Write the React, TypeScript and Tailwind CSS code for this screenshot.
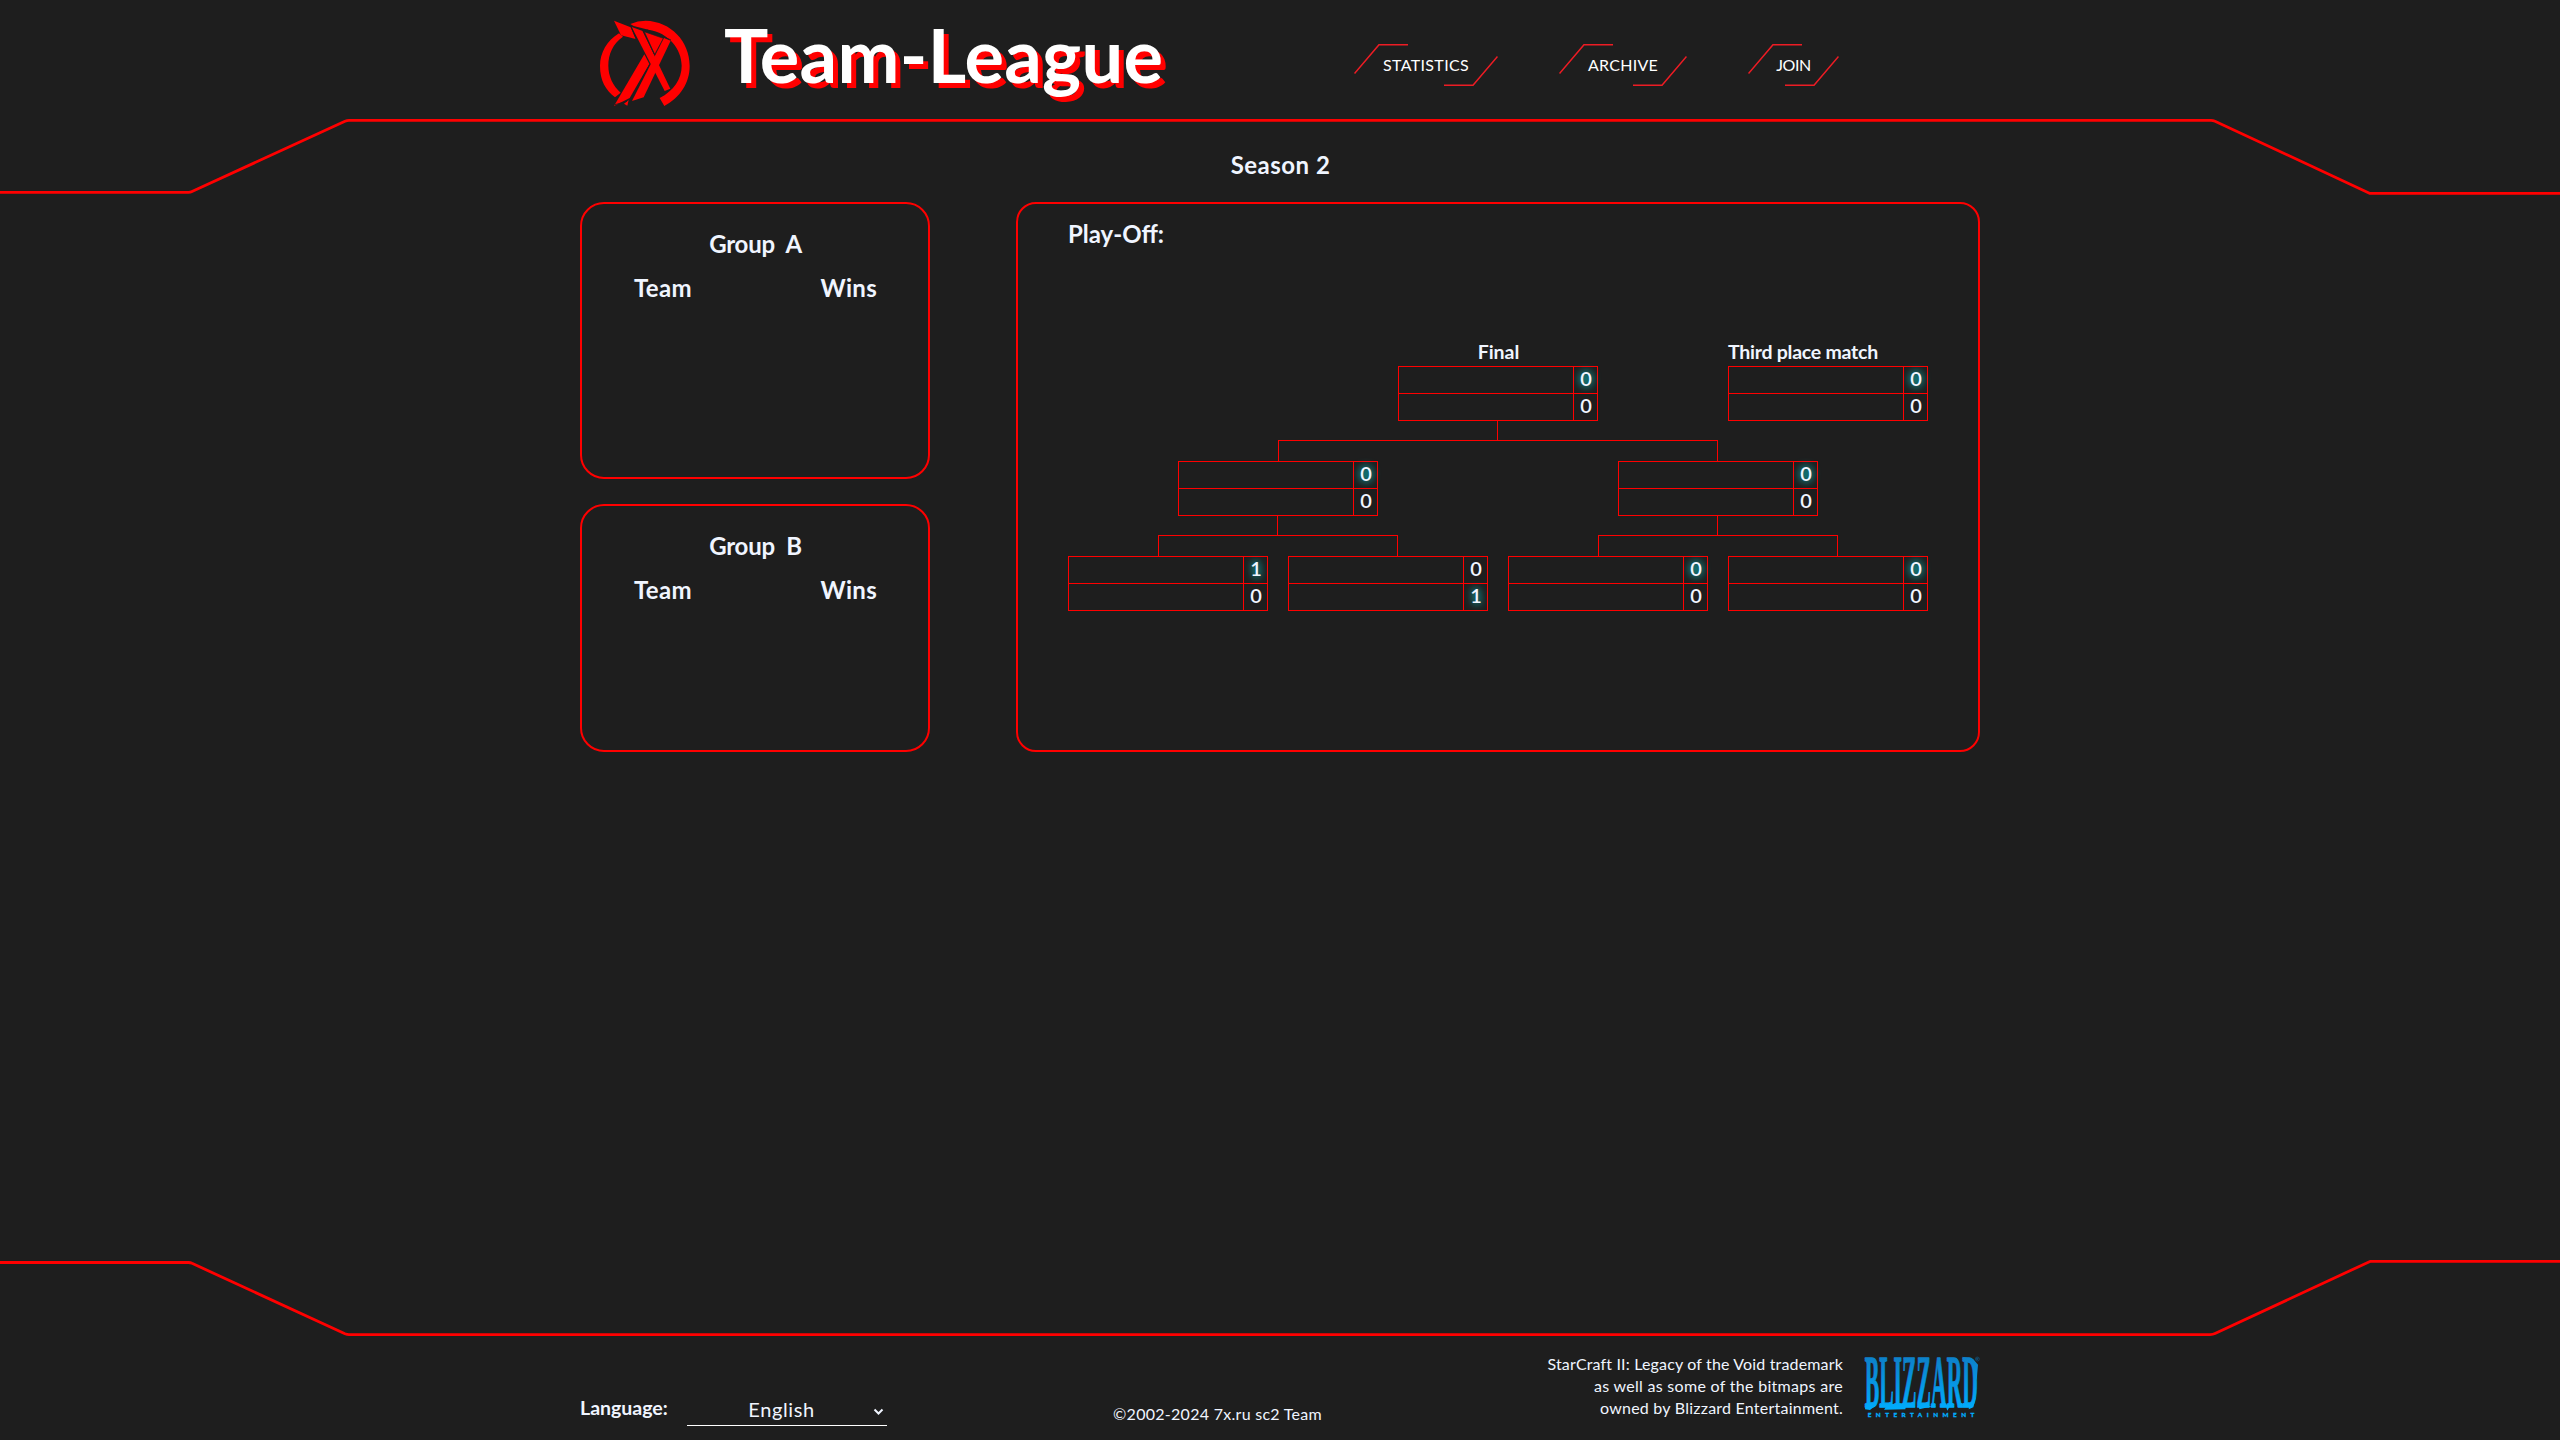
import React from "react";

type Pair = [number, number];

function FrameLines() {
  return (
    <svg className="pointer-events-none absolute inset-0" width="2560" height="1440" viewBox="0 0 2560 1440" fill="none" stroke="#ff0000" strokeWidth="2.8" strokeLinejoin="round" aria-hidden="true">
      <path d="M0 192.4H188.5Q190.5 192.4 192 191.6L345 121.2Q347 120.4 349 120.4H2211Q2213 120.4 2215 121.3L2370 193.4H2560" />
      <path d="M0 1262.5H188.5Q190.5 1262.5 192 1263.3L345 1333.8Q347 1334.6 349 1334.6H2210Q2213 1334.6 2215 1333.6L2370 1261.4H2560" />
    </svg>
  );
}

function LeagueLogo() {
  return (
    <svg className="mt-[14px] ml-[15px] shrink-0" width="100" height="98" viewBox="0 0 300 294" fill="#ff0000" aria-hidden="true">
      <path d="M106 30Q128 20 152 20C228 22 284 82 284 156C284 206 256 250 208 276L194 252C236 230 260 196 260 155C260 106 222 56 160 47L116 36Z" />
      <path d="M72 58L84 68C54 88 40 120 40 155C40 186 54 216 77 236L60 250C32 228 15 200 15 156C15 116 36 80 72 58Z" />
      <path d="M57 20L107 40L122 75L78 64Z" />
      <path d="M110 39L143 51L226 224L209 231Z" />
      <path d="M148 53L205 73L179 122Z" stroke="#1e1e1e" strokeWidth="2" />
      <path d="M207 72L227 80L146 250L111 261Z" />
      <path d="M148 121L163 150L104 252L57 276Z" />
      <path d="M101 258L97 275L87 269Z" />
      <path d="M163 153L106 258M108 38L124 76M143 49L179 122M60 272L96 262M155 47L228 78" stroke="#1e1e1e" strokeWidth="2.5" fill="none" />
    </svg>
  );
}

function NavButton({ label, width, tracking }: { label: string; width: string; tracking: string }) {
  return (
    <a className={`relative flex h-[42px] items-center justify-center pb-px text-base text-white ${width}`}>
      <svg className="absolute top-0 left-0" width="54" height="31" viewBox="0 0 54 31" fill="none" stroke="#ed1c24" strokeWidth="1.5" aria-hidden="true">
        <path d="M0.5 29.5L25 0.7H54" />
      </svg>
      <span className={tracking}>{label}</span>
      <svg className="absolute right-0 bottom-0" width="54" height="31" viewBox="0 0 54 31" fill="none" stroke="#ed1c24" strokeWidth="1.5" aria-hidden="true">
        <path d="M0 30.3H29L53.5 1.5" />
      </svg>
    </a>
  );
}

function GroupCard({ name, height }: { name: string; height: string }) {
  return (
    <section className={`rounded-[24px] border-2 border-[#ff0000] pt-[18px] pr-[51px] pl-[52px] text-2xl leading-[44px] font-bold ${height}`}>
      <h2 className="text-center leading-[44px] tracking-[-0.2px] whitespace-pre">{`Group  ${name}`}</h2>
      <div className="flex justify-between leading-[44px]">
        <span className="tracking-[0.3px]">Team</span>
        <span className="tracking-[0.3px]">Wins</span>
      </div>
    </section>
  );
}

const glow = "[text-shadow:0_0_10px_#00ffff,0_0_7px_#00ffff4d]";

function Match({ scores }: { scores: Pair }) {
  const winner = scores[0] >= scores[1] ? 0 : 1;
  return (
    <div className="flex h-[55px] w-[200px] flex-col divide-y divide-[#ff0000] border border-[#ff0000] text-xl">
      {scores.map((score, i) => (
        <div key={i} className="box-content flex h-[26px]">
          <span className="flex-1" />
          <span className={`flex w-6 items-center justify-center border-l border-[#ff0000] pb-1 pl-px font-semibold ${i === winner ? glow : ""}`}>{score}</span>
        </div>
      ))}
    </div>
  );
}

function Fork({ width }: { width: string }) {
  return (
    <div className={`flex h-10 flex-col ${width}`}>
      <div className="ml-[calc(50%-1px)] h-[19px] w-px bg-[#ff0000]" />
      <div className="flex-1 border-x border-t border-[#ff0000]" />
    </div>
  );
}

function Semifinal({ score, left, right }: { score: Pair; left: Pair; right: Pair }) {
  return (
    <div className="flex flex-col items-center">
      <Match scores={score} />
      <Fork width="w-[240px]" />
      <div className="flex gap-5">
        <Match scores={left} />
        <Match scores={right} />
      </div>
    </div>
  );
}

function BlizzardLogo() {
  return (
    <svg className="shrink-0 overflow-visible" width="118" height="74" viewBox="18 0 354 222" fill="url(#ice)" aria-label="Blizzard Entertainment">
      <defs>
        <linearGradient id="ice" gradientUnits="userSpaceOnUse" x1="0" y1="20" x2="0" y2="185">
          <stop offset="0" stopColor="#0d80c8" />
          <stop offset="1" stopColor="#00aeff" />
        </linearGradient>
      </defs>
      <text x="26" y="171" fontFamily='"Liberation Serif", serif' fontWeight="700" fontSize="222" stroke="url(#ice)" strokeWidth="4" textLength="340" lengthAdjust="spacingAndGlyphs">
        BLIZZARD
      </text>
      <path d="M26 24L44 30L40 60ZM28 168L60 166L42 180L27 178ZM84 179L96 162H128L152 156L148 178ZM318 20L352 28L366 44L362 90L346 40ZM188 168H232L190 178ZM268 165L284 165L274 182ZM340 165L360 140L352 172L338 178Z" />
      <text x="35" y="201" fontFamily="Lato, sans-serif" fontWeight="900" fontSize="19" stroke="#00aeff" strokeWidth="0.8" textLength="320" lengthAdjust="spacing">
        ENTERTAINMENT
      </text>
      <g fill="none" stroke="#0d80c8" strokeWidth="1.5" opacity="0.7">
        <circle cx="364" cy="27" r="6" />
        <path d="M362 30V24H366V27H362L366 30" />
      </g>
    </svg>
  );
}

export default function App() {
  return (
    <div className="relative h-[1440px] w-full overflow-hidden bg-[#1e1e1e] font-[Lato,sans-serif] text-[#f0f5ff]">
      <FrameLines />
      <div className="relative mx-auto flex h-full w-[1400px] flex-col">
        <header className="flex h-[119px] shrink-0 items-start">
          <LeagueLogo />
          <h1 className="mt-[10px] ml-[29px] w-[630px] shrink-0 text-[74px] leading-[90px] font-bold tracking-[0.3px] text-white [text-shadow:5px_5px_0_#ff0000]">Team-League</h1>
          <nav className="mt-[44px] flex gap-[61px]">
            <NavButton label="STATISTICS" width="w-[144px]" tracking="tracking-[0.35px]" />
            <NavButton label="ARCHIVE" width="w-[128px]" tracking="tracking-[0.25px]" />
            <NavButton label="JOIN" width="w-[91px]" tracking="tracking-[-0.4px]" />
          </nav>
        </header>

        <h2 className="mt-[30px] pl-px text-center text-2xl leading-8 font-bold tracking-[0.5px]">Season 2</h2>

        <main className="mt-[21px] flex justify-between">
          <div className="flex w-[350px] flex-col gap-[25px]">
            <GroupCard name="A" height="h-[277px]" />
            <GroupCard name="B" height="h-[248px]" />
          </div>

          <section className="h-[550px] w-[964px] rounded-[20px] border-2 border-[#ff0000] px-[50px] pt-2">
            <h2 className="text-2xl leading-[44px] font-bold">Play-Off:</h2>
            <div className="mt-[84px] flex justify-end gap-[130px]">
              <div>
                <h3 className="h-[26px] pl-px text-center text-[19.5px] leading-6 font-bold">Final</h3>
                <Match scores={[0, 0]} />
              </div>
              <div>
                <h3 className="h-[26px] text-[19.5px] leading-6 font-bold tracking-[-0.25px]">Third place match</h3>
                <Match scores={[0, 0]} />
              </div>
            </div>
            <div className="flex justify-center">
              <Fork width="w-[440px]" />
            </div>
            <div className="flex gap-5">
              <Semifinal score={[0, 0]} left={[1, 0]} right={[0, 1]} />
              <Semifinal score={[0, 0]} left={[0, 0]} right={[0, 0]} />
            </div>
          </section>
        </main>

        <footer className="mt-auto flex h-[104px] shrink-0 items-start">
          <span className="mt-[60px] w-[107px] text-[19.5px] leading-6 font-bold">Language:</span>
          <div className="mt-[58px] flex h-8 w-[200px] items-start border-b border-white pt-[3px] pr-[3px] text-xl leading-6">
            <span className="flex-1 pl-[3px] text-center tracking-[0.6px]">English</span>
            <svg className="mt-[11px]" width="11" height="8" viewBox="0 0 11 8" fill="none" stroke="currentColor" strokeWidth="2" aria-hidden="true">
              <path d="M1.5 1.5L5.5 5.5L9.5 1.5" />
            </svg>
          </div>
          <p className="mt-[68px] ml-[226px] w-[210px] text-base leading-5 tracking-[0.28px] whitespace-nowrap">©2002-2024 7x.ru sc2 Team</p>
          <div className="mt-[17px] flex flex-1 flex-col items-end pr-[19px] text-base leading-[22px]">
            <p className="tracking-[0.16px]">StarCraft II: Legacy of the Void trademark</p>
            <p className="tracking-[0.3px]">as well as some of the bitmaps are</p>
            <p className="tracking-[0.23px]">owned by Blizzard Entertainment.</p>
          </div>
          <div className="mt-[14px]">
            <BlizzardLogo />
          </div>
        </footer>
      </div>
    </div>
  );
}
